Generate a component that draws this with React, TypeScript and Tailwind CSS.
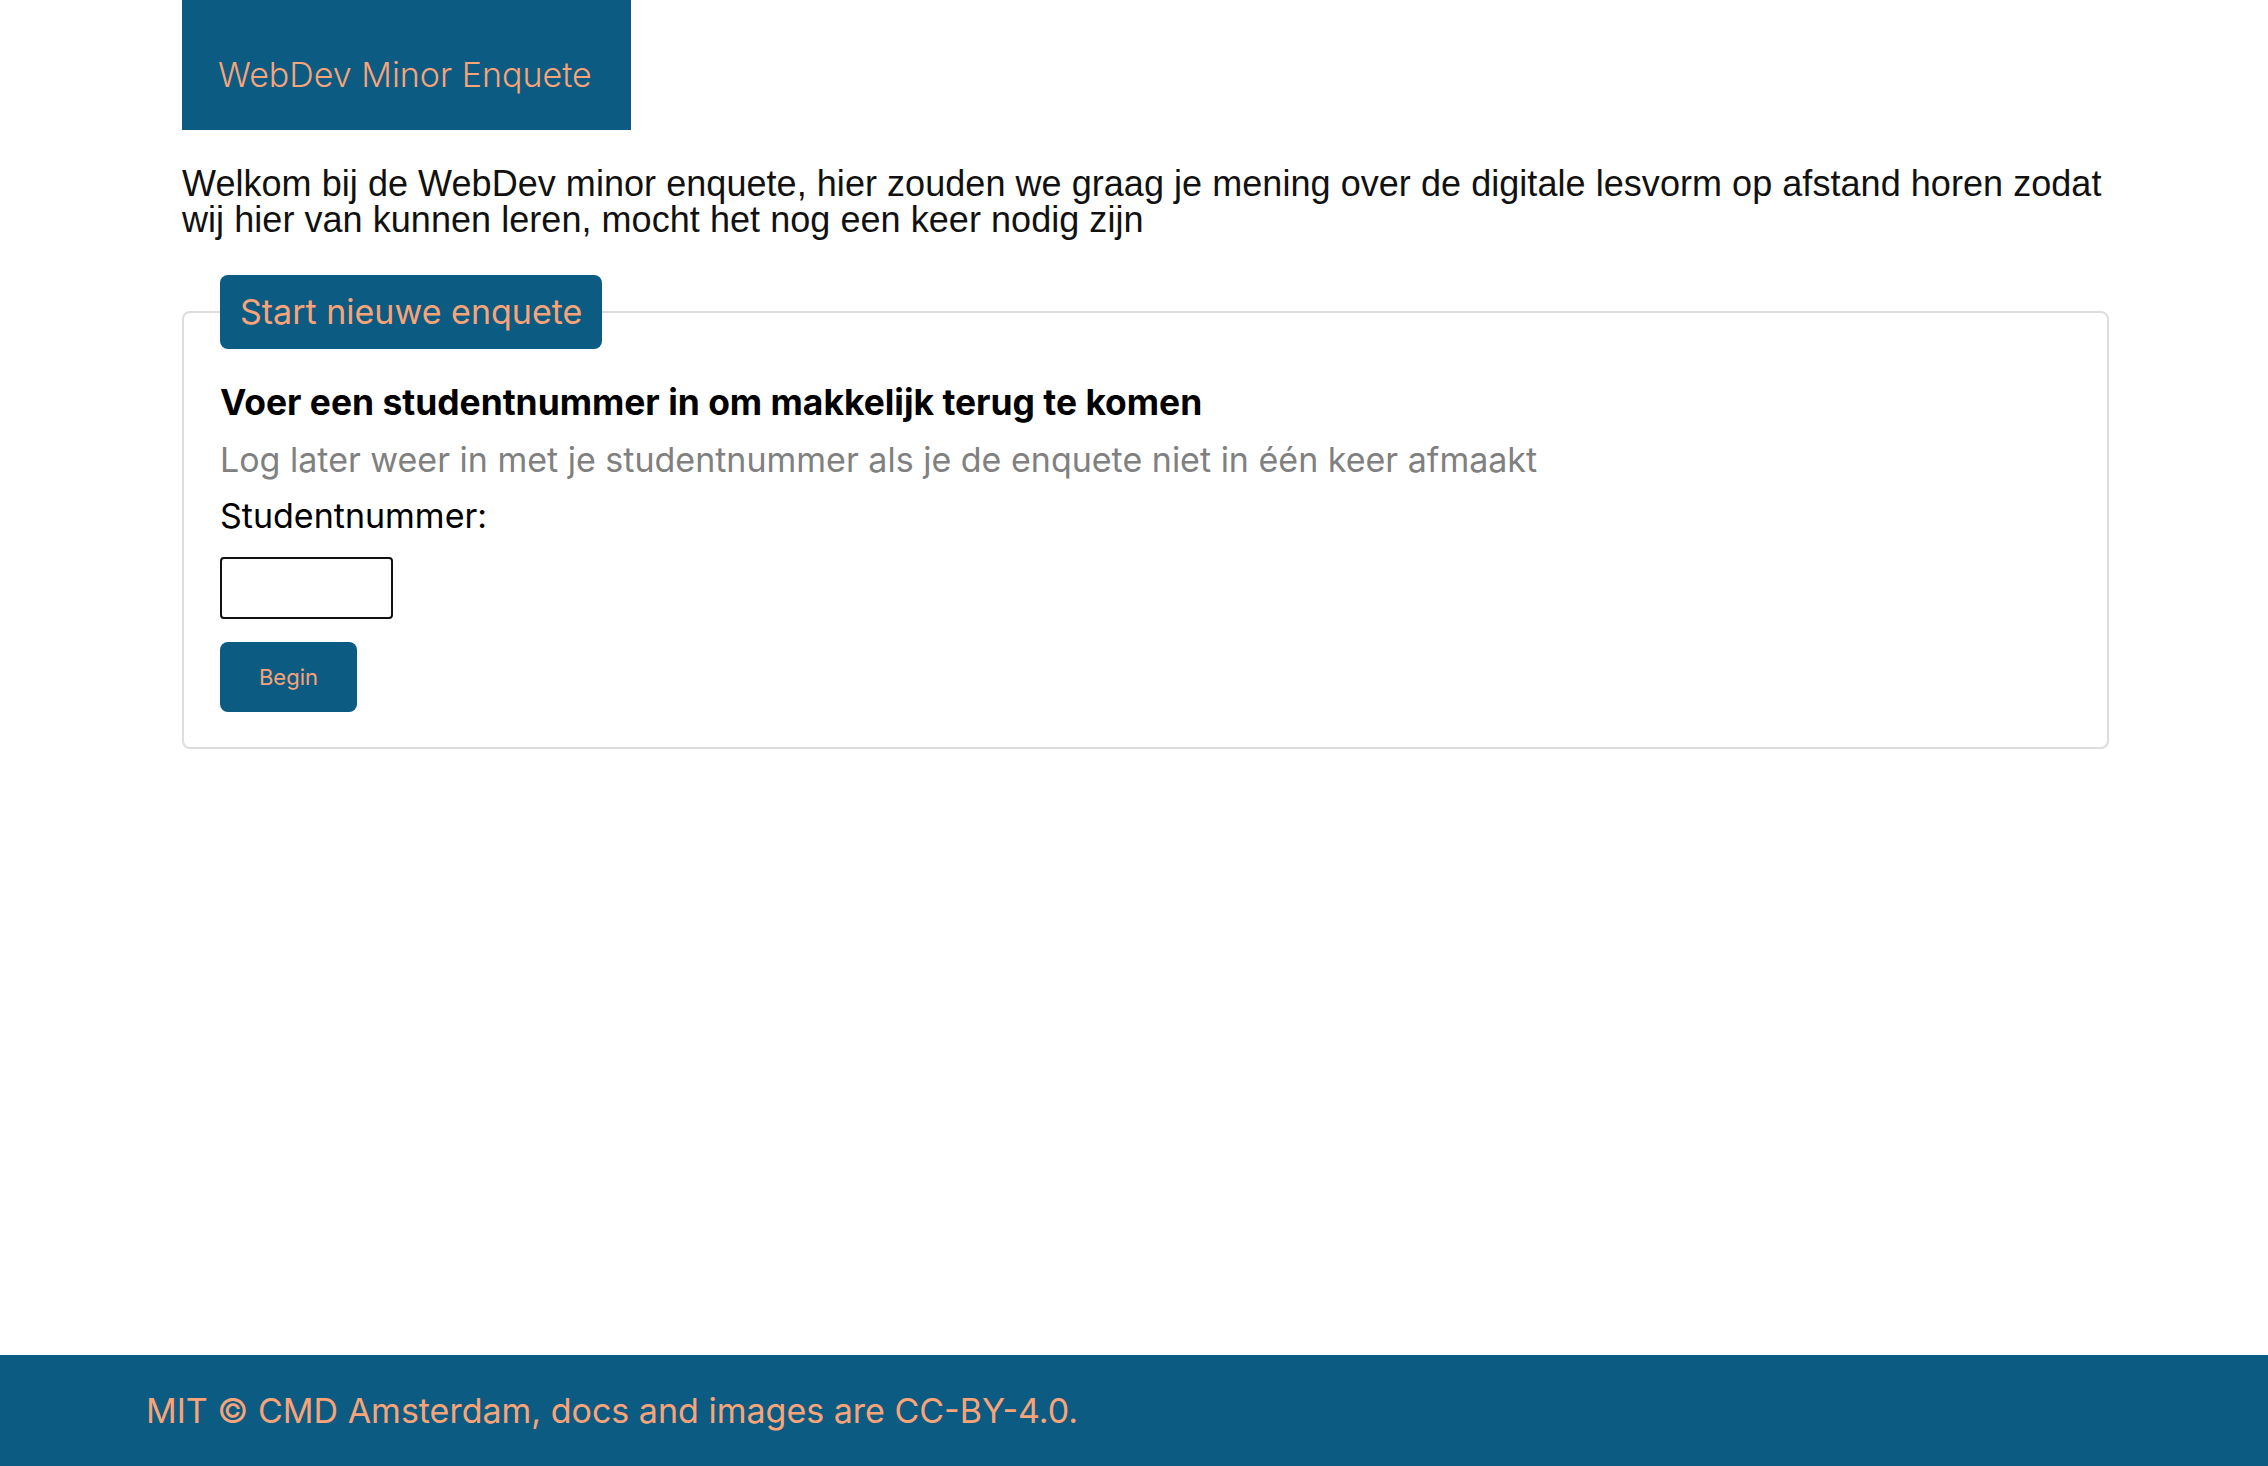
import React from "react";

const sans = "font-['Inter','Noto_Sans',sans-serif]";

function Header() {
  return (
    <header className="w-[449px] h-[130px] bg-[#0b5b82] pl-[36px] pt-[54px]">
      <h1 className={`${sans} text-[34px] leading-[42px] font-light text-[#f9a379] whitespace-nowrap`}>
        WebDev Minor Enquete
      </h1>
    </header>
  );
}

function StartForm() {
  return (
    <fieldset className="mt-[37px] border-2 border-[#dddddd] rounded-[8px] px-[36px] pt-[35px] pb-[35px]">
      <legend
        className={`${sans} h-[74px] px-[20px] rounded-[8px] bg-[#0b5b82] text-[34px] leading-[74px] text-[#f9a379]`}
      >
        Start nieuwe enquete
      </legend>
      <h2 className={`${sans} text-[35.4px] leading-[38px] font-bold text-black`}>
        Voer een studentnummer in om makkelijk terug te komen
      </h2>
      <p className={`${sans} mt-[18px] text-[34px] leading-[40px] text-[#808080]`}>
        Log later weer in met je studentnummer als je de enquete niet in één keer afmaakt
      </p>
      <label htmlFor="studentnummer" className={`${sans} block mt-[16px] text-[34px] leading-[40px] text-black`}>
        Studentnummer:
      </label>
      <input
        id="studentnummer"
        type="text"
        className="block mt-[21px] w-[173px] h-[62px] border-2 border-[#111111] rounded-[4px] bg-white"
      />
      <button
        type="button"
        className={`${sans} block mt-[23px] w-[137px] h-[70px] rounded-[8px] bg-[#0b5b82] text-[22px] text-[#f9a379]`}
      >
        Begin
      </button>
    </fieldset>
  );
}

export default function App() {
  return (
    <div className="min-h-screen flex flex-col bg-white">
      <main className="flex-1 ml-[182px] w-[1927px]">
        <Header />
        <p className="mt-[36px] font-['Liberation_Sans',Arial,sans-serif] text-[36px] leading-[36px] tracking-[0.05px] text-[#111111]">
          Welkom bij de WebDev minor enquete, hier zouden we graag je mening over de digitale lesvorm op afstand horen
          zodat wij hier van kunnen leren, mocht het nog een keer nodig zijn
        </p>
        <StartForm />
      </main>
      <footer className="h-[111px] bg-[#0b5b82] flex items-center pl-[146px]">
        <p className={`${sans} text-[34px] leading-[40px] text-[#f9a379]`}>
          MIT © CMD Amsterdam, docs and images are CC-BY-4.0.
        </p>
      </footer>
    </div>
  );
}
